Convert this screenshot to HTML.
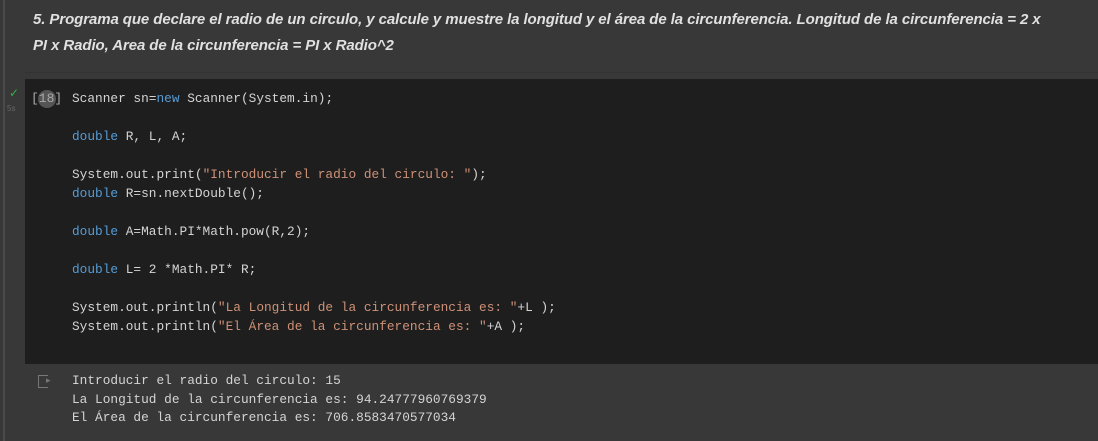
<!DOCTYPE html>
<html><head><meta charset="utf-8"><style>
body{margin:0;width:1098px;height:441px;background:#383838;overflow:hidden;position:relative;font-family:"Liberation Sans",sans-serif}
.vl{position:absolute;left:3px;top:0;width:2px;height:441px;background:#4a4a4a}
.h{position:absolute;left:33px;top:7px;width:1060px;white-space:nowrap;color:#e0e0e0;font:italic bold 15px/26px "Liberation Sans",sans-serif;letter-spacing:-0.09px}
.sep{position:absolute;left:25px;right:0;top:72px;height:1px;background:#333}
.code{position:absolute;left:25px;top:79px;width:1073px;height:285px;background:#1e1e1e}
pre{margin:0;font:12.8px/19px "Liberation Mono",monospace;color:#d4d4d4}
.c{position:absolute;left:72px;top:89px}
.o{position:absolute;left:72px;top:372px;line-height:18.5px}
.k{color:#569cd6}.s{color:#ce9178}
.num{position:absolute;left:31px;top:89px;font:13px/19px "Liberation Mono",monospace;color:#aaa}
.badge{position:absolute;left:38px;top:90px;width:18px;height:18px;border-radius:50%;background:#555}
.chk{position:absolute;left:9px;top:86px;color:#2fb344;font-size:12px}
.t{position:absolute;left:7px;top:104px;color:#666;font-size:8px}
.oi{position:absolute;left:38px;top:375px;width:9px;height:11px;border:1.5px solid #777;border-right:none;}
.oa{position:absolute;left:46px;top:375px;color:#777;font-size:9px}
</style></head><body>
<div class="vl"></div>
<div class="h">5. Programa que declare el radio de un circulo, y calcule y muestre la longitud y el área de la circunferencia. Longitud de la circunferencia = 2 x<br>PI x Radio, Area de la circunferencia = PI x Radio^2</div>
<div class="sep"></div>
<div class="code"></div>
<div class="chk">✓</div><div class="t">5s</div>
<div class="badge"></div>
<div class="num">[18]</div>
<pre class="c">Scanner sn=<span class="k">new</span> Scanner(System.in);

<span class="k">double</span> R, L, A;

System.out.print(<span class="s">"Introducir el radio del circulo: "</span>);
<span class="k">double</span> R=sn.nextDouble();

<span class="k">double</span> A=Math.PI*Math.pow(R,2);

<span class="k">double</span> L= 2 *Math.PI* R;

System.out.println(<span class="s">"La Longitud de la circunferencia es: "</span>+L );
System.out.println(<span class="s">"El Área de la circunferencia es: "</span>+A );</pre>
<div class="oi"></div><div class="oa">▸</div>
<pre class="o">Introducir el radio del circulo: 15
La Longitud de la circunferencia es: 94.24777960769379
El Área de la circunferencia es: 706.8583470577034</pre>
</body></html>
